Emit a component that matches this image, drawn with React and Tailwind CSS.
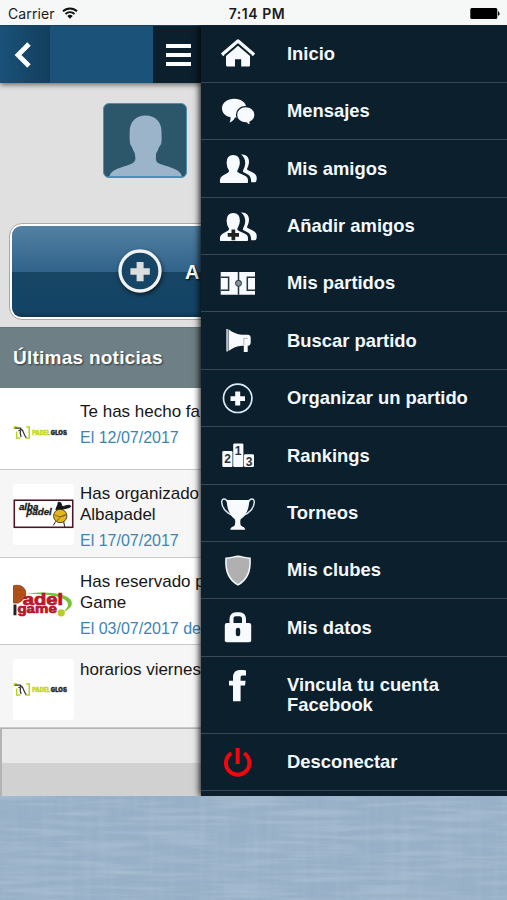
const W = "#f7fbff";
const N = "#0b1f2c";

const Icon = ({ children }) => (
  <svg viewBox="0 0 40 40" className="mt-[9px] h-10 w-10 shrink-0">{children}</svg>
);

const People = () => (
  <>
    <path d="M23 5.600c5-.6 8 2.400 8 7 0 3-1 5-2 7.500 0 2 8.500 3 9.500 7.500.4 1.600.2 4.200-.6 5.200-1 .8-2.800.4-4.700.4 0-6-2-7.500-8.200-10.200-.6-2 2-4 2.200-8.500.2-4-1.500-7-4.200-8.900z" fill={W} />
    <path d="M15.300 5.400c5.200 0 7.300 3.500 7.300 8.300 0 3.800-1.600 6.300-2.700 8.300 0 2.200 9.600 2.600 10.600 7.500.7 5.500 0 5.200-3 5.200H4c-3 0-3.200-1-2.600-4.600.8-5.200 9-5.800 9-8.100-1.400-2-2.500-4.600-2.500-8.300 0-4.800 2.200-8.300 7.400-8.300z" fill={W} stroke={N} strokeWidth="1.400" />
  </>
);

const home = (
  <>
    <path d="M4 20.800 20 7l16 13.800" fill="none" stroke={W} strokeWidth="3.600" strokeLinejoin="round" />
    <path d="M20 11.800 32 22v9.100c0 1-.6 1.500-1.500 1.500H23.200v-7.400h-6.200v7.400H9.600c-1 0-1.600-.6-1.600-1.500V22z" fill={W} />
    <path d="M6 21.500 20 9.800l14 11.700" fill="none" stroke={N} strokeWidth=".8" />
  </>
);
const chat = (
  <>
    <path d="M16.200 6.700c7 0 12.200 4 12.200 9.500s-5.200 9.300-11.500 9.300c-.8 2.400-2.800 4.200-5.400 5 .9-1.600 1.300-3.400.9-5.400C7 24 4 20.500 4 16.200c0-5.500 5.500-9.500 12.200-9.500z" fill={W} />
    <path d="M27.700 14.700c5.400 0 9.300 3.400 9.300 8.100 0 3.200-2 5.900-5 7.200-.1 1.400.2 2.400.9 3.500-2-.4-3.500-1.300-4.500-2.600-5.600.2-9.900-3.400-9.900-8.100s3.900-8.100 9.200-8.100z" fill={W} stroke={N} strokeWidth="1.300" />
  </>
);
const addPeople = (
  <>
    <People />
    <path d="M13.500 22.500h3.700v3.500h3.800v3.700h-3.800v3.500h-3.700v-3.500H9.700V26h3.800z" fill="#222" />
  </>
);
const court = (
  <>
    <path d="M2.700 8H37v22.700H2.700z" fill={W} />
    <path d="M2.700 13.200H10.600v13H2.700M37 13.200H29.300v13H37M20.500 8v22.700" fill="none" stroke="#24333e" strokeWidth="1.500" />
    <circle cx="20.500" cy="19.300" r="3" fill="#87919a" stroke="#24333e" strokeWidth="1" />
  </>
);
const horn = (
  <>
    <path d="M8.200 8h1.800v22.500H8.200z" fill="#b9c2c9" />
    <path d="M10.500 8.200C14.500 11.500 19 13.300 24 13.700v11c-5 .4-9.500 2-13.500 5.300z" fill={W} />
    <path d="M24 13.700h6c1.800 0 2.700 1.500 2.700 3.400v4.400c0 1.600-.8 2.800-2 3.200h-1v6.200h-3.900v-6.200H24z" fill={W} />
    <path d="M25.800 24V17.500h3.700" fill="none" stroke="#8c98a1" strokeWidth=".7" />
  </>
);
const plus = (
  <>
    <circle cx="19.700" cy="19.300" r="14.200" fill="none" stroke="#dcecf7" strokeWidth="1.700" />
    <path d="M17.200 12.500h5v4.700H27v4.800h-4.800v4.600h-5V22h-4.700v-4.800h4.700z" fill={W} />
  </>
);
const ranks = (
  <>
    <rect x="4.300" y="15" width="10.200" height="16" rx="1.200" fill={W} />
    <rect x="15.200" y="7.500" width="10.200" height="23.500" rx="1.200" fill={W} />
    <rect x="26" y="18.300" width="10" height="12.700" rx="1.200" fill={W} />
    <g fontFamily="Liberation Sans, sans-serif" fontWeight="700" fontSize="12" fill="#26323b" textAnchor="middle">
      <text x="9.500" y="27.400">2</text>
      <text x="20" y="18.600">1</text>
      <text x="31" y="29.500">3</text>
    </g>
  </>
);
const cup = (
  <>
    <path d="M10 9C8 3.500 3.500 4 3.700 8.500 4 13.500 8 19 15 21.500M30 9c2-5.500 6.500-5 6.300-.5C36 13.500 32 19 25 21.500" fill="none" stroke="#d8e6ef" strokeWidth="1.500" />
    <path d="M8.700 6h22.600c-.3 8-2.300 14.700-8.600 19.300-.7 1.800-.5 5 .3 6.500 1.600 1 3.700 1 4.200 4H12.300c.5-3 2.600-3 4.200-4 .8-1.500 1-4.700.3-6.500C11 20.700 9 14 8.700 6z" fill={W} />
  </>
);
const shield = (
  <path d="M8 7.300C12 6.900 16 5.800 20 5.200c4 .6 8 1.700 12 2.100.8 12-2 21.500-12 26.500C10 28.800 7.200 19.300 8 7.300z" fill="#b0b0b0" stroke={W} strokeWidth="1.500" />
);
const lock = (
  <>
    <path d="M13.500 17v-6.200c0-3 2-4.600 4.300-4.600h3.800c2.400 0 4.400 1.600 4.400 4.600V17" fill="none" stroke={W} strokeWidth="4" />
    <rect x="6.800" y="15" width="26.400" height="19.300" rx="2" fill={W} />
    <rect x="17.800" y="19.700" width="4.400" height="8.600" rx="2.200" fill={N} />
  </>
);
const face = (
  <path d="M28 4.400v5.200h-3.400c-1.600 0-2 .8-2 2.200v3h5l-.6 4.800h-4.400v15.700H15V19.600h-4v-4.800h4v-3.500c0-4.800 2.700-7.300 7.600-7.300 2 0 4 .1 5.400.4z" fill={W} />
);
const power = (
  <g fill="none" stroke="#f5060c" strokeWidth="4">
    <path d="M13.300 10.200a11.700 11.700 0 1 0 12.800 0" />
    <path d="M19.700 5v16" />
  </g>
);

const MENU = [
  ["Inicio", home],
  ["Mensajes", chat],
  ["Mis amigos", <People />],
  ["Añadir amigos", addPeople],
  ["Mis partidos", court],
  ["Buscar partido", horn],
  ["Organizar un partido", plus],
  ["Rankings", ranks],
  ["Torneos", cup],
  ["Mis clubes", shield],
  ["Mis datos", lock],
  ["Vincula tu cuenta Facebook", face],
  ["Desconectar", power],
];

const Glos = () => (
  <svg viewBox="0 0 61 62" className="block h-full w-full">
    <path d="M4 25.500H.8v2M13 25.500h3v11.200h-4M7 36.700H3.200V30" fill="none" stroke="#b9d21b" strokeWidth="1.500" />
    <path d="M1.500 26.500h6M7.500 26c-.5 4-1.500 7 .5 9.500M5 29l4-1M8.500 28c2 2 2 6 4.500 8" fill="none" stroke="#333" strokeWidth="1.300" />
    <g fontFamily="Inter, sans-serif" fontWeight="900" fontSize="5.800" strokeWidth=".35">
      <text x="19" y="33.500" textLength="18.300" lengthAdjust="spacingAndGlyphs" fill="#c3d824" stroke="#c3d824">PADEL</text>
      <text x="37.900" y="33.500" textLength="16.300" lengthAdjust="spacingAndGlyphs" fill="#2a2a2a" stroke="#2a2a2a">GLOS</text>
    </g>
  </svg>
);
const Alba = () => (
  <svg viewBox="0 0 61 62" className="block h-full w-full">
    <rect x=".8" y="16.500" width="59.400" height="27.500" fill="#fff" stroke="#4a1626" strokeWidth="1.600" />
    <g fontFamily="Liberation Sans, sans-serif" fontWeight="700" fontStyle="italic" fontSize="9" fill="#181818" stroke="#181818" strokeWidth=".3">
      <text x="5.500" y="26" textLength="20" lengthAdjust="spacingAndGlyphs">alba</text>
      <text x="13" y="31.300" textLength="26" lengthAdjust="spacingAndGlyphs">padel</text>
    </g>
    <path d="M43 26l2-5 .5-2.500 2.500.5 1.500 4 7-1.500 2 1.200-2 1.300-6 1.500-3 2zM43 38l-2.500 4M51 38l1 5.500" fill="#151515" stroke="#151515" strokeWidth="1" />
    <circle cx="47.500" cy="32.500" r="6.800" fill="#e3b51d" stroke="#2b240f" strokeWidth=".8" />
    <path d="M41.500 31c4 3 9 3 13-1M44 38c2-4 5-6 10-7" stroke="#7b5b0b" strokeWidth=".9" fill="none" />
  </svg>
);
const Game = () => (
  <svg viewBox="0 0 61 62" className="block h-full w-full">
    <path d="M0 14C7 12 12.500 16 12.500 21.500 12.500 27 8 29.500 5 31.500H0z" fill="#b4521a" stroke="#7c3a15" strokeWidth=".8" />
    <path d="M0 18h11M0 23h11M3 14v17M7 14v15" stroke="#98471a" strokeWidth=".4" />
    <path d="M0 33h3v11H0z" fill="#222" />
    <path d="M12 22.500C30 19 56 21 59 30c1.500 5-3 8.500-9 11 5-4 6.500-7 4.500-10.500C51 24.500 32 22 12 22.500z" fill="#76c434" />
    <g fontFamily="Liberation Sans, sans-serif" fontWeight="700" fill="#c8142c" stroke="#b01228" strokeWidth=".7">
      <text x="9.500" y="33.500" fontSize="16" textLength="41" lengthAdjust="spacingAndGlyphs">adel</text>
      <text x="4" y="42" fontSize="12.500" textLength="40" lengthAdjust="spacingAndGlyphs">game</text>
    </g>
    <circle cx="48.500" cy="41.500" r="3.700" fill="#b5cf28" />
  </svg>
);

const NEWS = [
  ["h-[82px] bg-white pt-[13px]", "mt-[1px]", <Glos />, ["Te has hecho fa"], "El 12/07/2017"],
  ["h-[88px] bg-[#f6f6f6] pt-[13px]", "mt-[1px] bg-white", <Alba />, ["Has organizado", "Albapadel"], "El 17/07/2017"],
  ["h-[87px] bg-white pt-[13px]", "mt-[1px]", <Game />, ["Has reservado p", "Game"], "El 03/07/2017 de"],
  ["h-[83px] bg-[#f6f6f6] pt-[14px]", "bg-white", <Glos />, ["horarios viernes"], null],
];

export default function App() {
  return (
    <div className="flex h-[900px] w-[507px] flex-col overflow-hidden bg-[#9ab1c7] font-['Liberation_Sans',Arial,sans-serif]">
      <div className="grid h-[25px] shrink-0 grid-cols-3 items-center bg-[#f6f7f7] pt-[2px] font-['Inter',sans-serif] text-[14px] leading-[20px] text-[#1b1b1b]">
        <div className="flex items-center gap-[7px] pl-2">
          <span className="tracking-[0.120px]">Carrier</span>
          <svg viewBox="0 0 16 12" className="mb-px h-3 w-4">
            <path d="M1 4.300a10 10 0 0 1 14 0M3.500 7a6.400 6.400 0 0 1 9 0" fill="none" stroke="#111" strokeWidth="1.900" />
            <path d="M8 11.800 5.300 9a3.900 3.900 0 0 1 5.400 0z" fill="#111" />
          </svg>
        </div>
        <div className="pl-[7px] text-center font-semibold tracking-[0.550px]">7:14 PM</div>
        <svg viewBox="0 0 32 13" className="mr-[6px] mb-px h-[13px] w-8 justify-self-end">
          <rect x="1.300" y="1" width="27" height="11" rx="1.500" fill="#000" />
          <path d="M29 4.500h.8q1.500 2 0 4H29z" fill="#000" />
        </svg>
      </div>

      <div className="flex h-[771px] shrink-0">
        <main className="flex w-[201px] shrink-0 flex-col overflow-hidden bg-[#e0e0e0]">
          <header className="z-10 flex h-[58px] shrink-0 border-t border-[#17415c] shadow-[0_2px_5px_rgba(0,0,0,0.500)]">
            <div className="flex w-[50px] items-center justify-center bg-linear-to-r from-[#1a5179] to-[#123f5d] pr-[4px]">
              <svg viewBox="0 0 18 26" className="mt-px h-[26px] w-[18px]">
                <path d="M15 2 4 13l11 11" fill="none" stroke="#fff" strokeWidth="4.800" />
              </svg>
            </div>
            <div className="w-[103px] bg-[#1a527a]" />
            <div className="flex w-12 flex-col items-center justify-center gap-[5px] bg-[#0b1f2c] pt-[1px] pl-[2px]">
              <div className="h-1 w-[25px] bg-white" />
              <div className="h-1 w-[25px] bg-white" />
              <div className="h-1 w-[25px] bg-white" />
            </div>
          </header>

          <section className="flex h-[244px] shrink-0 flex-col">
            <div className="mt-[20px] ml-[103px] h-[75px] w-[84px] shrink-0 overflow-hidden rounded-[6px] border border-[#4c8fb5] bg-[#2c576a]">
              <svg viewBox="0 0 82 73" className="block h-full w-full">
                <path d="M41.500 11.500c10 0 16 6.500 16 16 0 4 .5 8-.2 11.500-.4 2.500-2.300 3.500-3 6-.8 2.500-2.300 3.500-2.300 6 0 3.500-.7 5.500 1.500 7.500 5.500 4 23.500 5 24.500 14.500H5.500c1-9.500 18.500-10 24-14.500 2.500-2 1.900-4.500 1.500-7.500 0-2.500-1.500-3.500-2.300-6-.7-2.500-2.300-3.500-2.700-6-.6-3.500-.3-7.500-.3-11.500 0-9.500 6-16 15.800-16z" fill="#9bb4c9" />
                <path d="M0 72.500h82" stroke="#4c8fb5" />
              </svg>
            </div>
            <div className="mt-[45px] ml-[9px] flex h-[97px] w-[489px] shrink-0 items-center rounded-[13px] border border-[#a8a8a8] bg-white p-[2px]">
              <div className="flex h-full w-full flex-col justify-center rounded-[9px] bg-[linear-gradient(to_bottom,#5381a3_0%,#30628a_51%,#174564_51%,#134466_94%,#0f3750_100%)]">
                <div className="flex items-center gap-[20px] pl-[103px]">
                  <svg viewBox="0 0 50 50" className="h-[50px] w-[50px] drop-shadow-[1px_2px_2px_rgba(0,0,0,0.600)]">
                    <circle cx="25" cy="24" r="20" fill="#174566" stroke="#f0f2f4" strokeWidth="3.300" />
                    <path d="M21.600 15h7v6.300h6.200v6.400h-6.200v6.500h-7v-6.500h-6.200v-6.400h6.200z" fill="#dcdddd" />
                  </svg>
                  <span className="text-[20px] font-bold text-white [text-shadow:1px_1px_2px_#000]">A</span>
                </div>
              </div>
            </div>
          </section>

          <h2 className="flex h-[61px] shrink-0 items-center border-t border-[#62757c] bg-[#6e8086] pl-[13px] text-[19px] font-bold tracking-[0.250px] text-white [text-shadow:1px_1px_2px_rgba(0,0,0,0.600)]">
            Últimas noticias
          </h2>

          {NEWS.map(([row, logo, art, lines, date], i) => (
            <article key={i} className={"flex w-[507px] shrink-0 gap-[6px] border-b border-[#c9c9c9] pl-[13px] " + row}>
              <div className={"h-[61px] w-[61px] shrink-0 overflow-hidden rounded-[3px] " + logo}>{art}</div>
              <div className="whitespace-nowrap text-[17px] leading-[21px] text-[#161616]">
                {lines.map((l) => (
                  <p key={l}>{l}</p>
                ))}
                {date && <p className="mt-[5px] text-[16px] text-[#3c85b3]">{date}</p>}
              </div>
            </article>
          ))}
          <div className="flex grow flex-col border-t border-l-2 border-[#b3b3b3]">
            <div className="h-[34px] bg-[#e9e9e9]" />
            <div className="grow bg-[#d1d1d1]" />
          </div>
        </main>

        <nav className="relative z-20 flex grow flex-col overflow-hidden bg-[#0b1f2c] shadow-[-1px_0_7px_rgba(0,0,0,1)] [clip-path:inset(0_0_0_-12px)]">
          {MENU.map(([label, icon], i) => (
            <div
              key={label}
              className={
                "flex shrink-0 border-b border-[#3c4851] pl-[17px] " +
                (i === 11 ? "h-[77px]" : i === 0 ? "h-[57.800px]" : "h-[57.400px]")
              }
            >
              <Icon>{icon}</Icon>
              <span className="ml-[29px] w-[185px] self-center text-[18.400px] leading-[19.500px] font-bold text-[#f3f9fd]">
                {label}
              </span>
            </div>
          ))}
        </nav>
      </div>

      <svg viewBox="0 0 507 104" className="block h-[104px] w-[507px] shrink-0">
        <defs>
          <filter id="weft" x="0" y="0" width="100%" height="100%">
            <feTurbulence type="fractalNoise" baseFrequency="0.014 0.200" numOctaves="2" seed="4" />
            <feColorMatrix values="0 0 0 0 .72  0 0 0 0 .82  0 0 0 0 .91  1.500 0 0 0 -.6" />
          </filter>
          <filter id="warp" x="0" y="0" width="100%" height="100%">
            <feTurbulence type="fractalNoise" baseFrequency="0.120 0.010" numOctaves="2" seed="9" />
            <feColorMatrix values="0 0 0 0 .45  0 0 0 0 .57  0 0 0 0 .69  1.400 0 0 0 -.6" />
          </filter>
        </defs>
        <rect width="507" height="104" fill="#98b0c7" />
        <rect width="507" height="104" filter="url(#weft)" opacity=".3" />
        <rect width="507" height="104" filter="url(#warp)" opacity=".3" />
      </svg>
    </div>
  );
}
